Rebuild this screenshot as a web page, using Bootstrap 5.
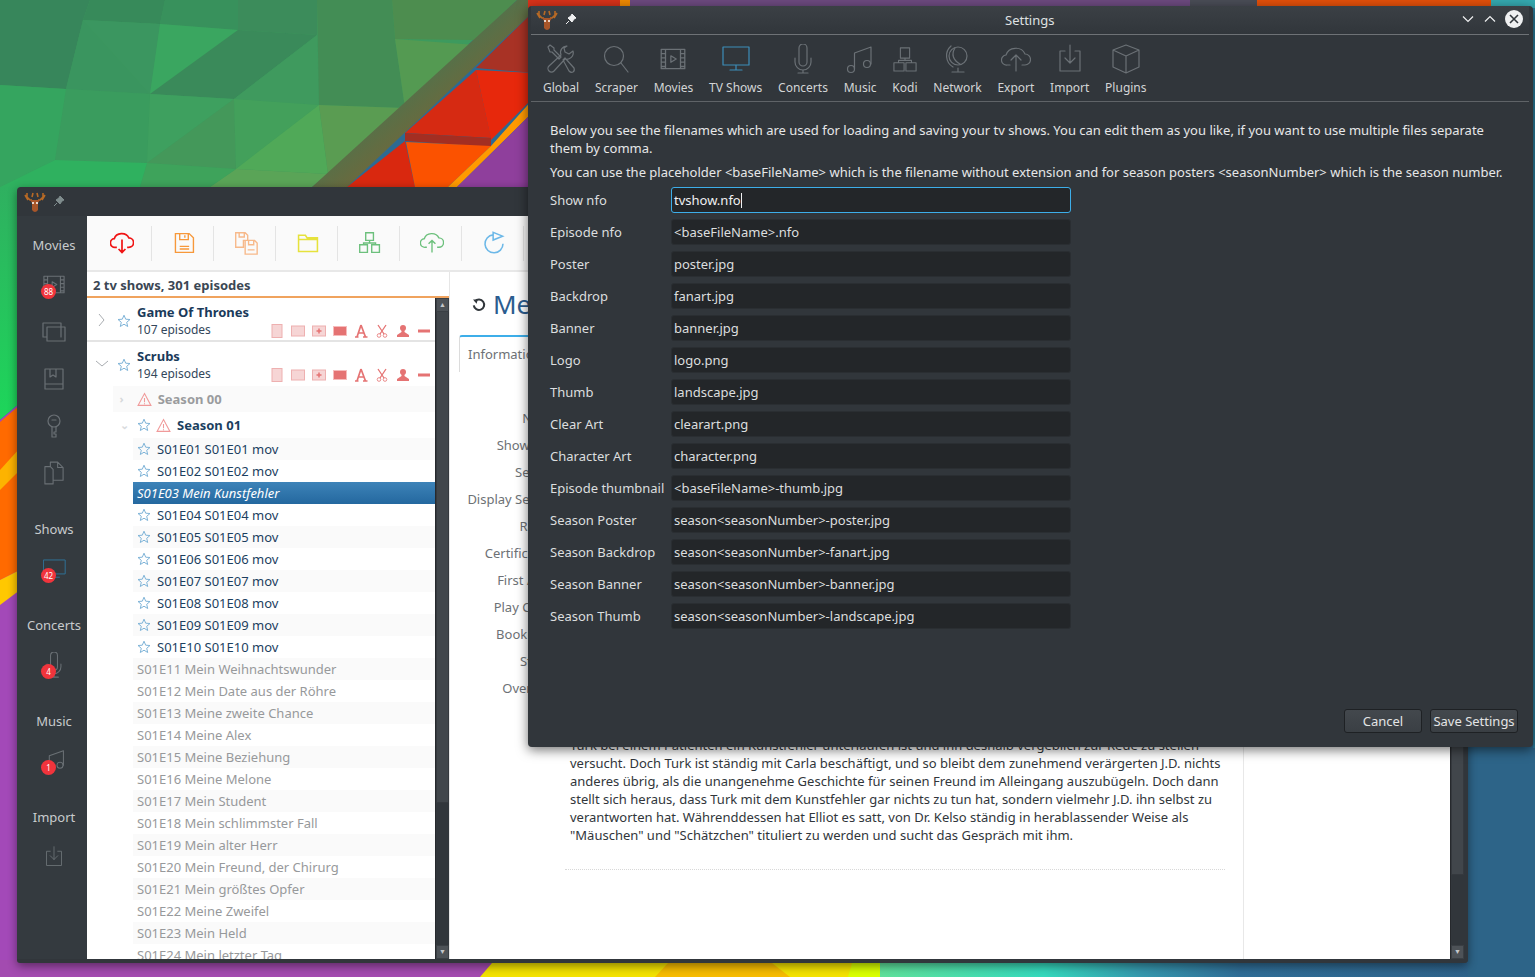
<!DOCTYPE html>
<html lang="en">
<head>
    <meta charset="UTF-8">
    <meta name="viewport" content="width=device-width, initial-scale=1.0">
    <title>MediaElch</title>
    <link href="https://cdn.jsdelivr.net/npm/bootstrap@5.3.0/dist/css/bootstrap.min.css" rel="stylesheet">
    <style>
        html, body { margin: 0; width: 1535px; height: 977px; overflow: hidden; background: #2d6a93; font-family: "Noto Sans", sans-serif; font-size: 13px; line-height: 18px; }
        .desk { position: relative; width: 1535px; height: 977px; overflow: hidden; }
        .wallpaper { position: absolute; left: 0; top: 0; }
        svg { display: block; flex: none; }
        .ico { fill: none; stroke: currentColor; stroke-width: 1.2; stroke-linejoin: round; stroke-linecap: round; }

        /* main window */
        .win-main { position: absolute; left: 17px; top: 187px; width: 1451px; height: 776px; background: #31363b; border-radius: 4px 4px 3px 3px; box-shadow: 0 3px 10px rgba(0,0,0,.45); }
        .win-head { height: 29px; color: #7f8c8d; padding: 5px 0 0 7px; gap: 7px; }
        .win-body { height: 743px; }
        .side-bar { width: 70px; background: #343a3f; padding: 20px 0 0 4px; color: #6a7075; }
        .side-title { color: #c8cbcd; text-align: center; height: 18px; }
        .side-head { margin-top: 24px; }
        .side-group { margin-top: 7px; }
        .side-icon { position: relative; height: 47px; display: flex; justify-content: center; align-items: center; }
        .red-dot { position: absolute; left: 20px; top: 23px; width: 15px; height: 15px; border-radius: 50%; background: #f0343c; color: #fff; font-size: 8px; line-height: 15px; text-align: center; }
        .main-area { width: 1377px; background: #fff; color: #31363b; overflow: hidden; }
        .tool-row { height: 56px; background: #fafafa; border-bottom: 2px solid #e8e8e8; padding: 10px 0 0 3px; }
        .tool-btn { width: 62px; height: 35px; border-right: 1px solid #e4e4e4; padding: 0 0 2px 3px; display: flex; align-items: center; justify-content: center; }
        .panes { height: 687px; }

        /* show list */
        .list-pane { width: 363px; border-right: 1px solid #e6e6e6; }
        .list-head { height: 26px; font-weight: 700; color: #3b4754; padding: 4px 6px 0; border-bottom: 2px solid #f0a35e; }
        .list-wrap { height: 661px; }
        .list-rows { width: 349px; overflow: hidden; color: #1c3f5f; }
        .show-row { height: 44px; border-bottom: 2px solid #e4e4e4; padding: 5px 0 0 50px; position: relative; }
        .show-last { border-bottom: 0; height: 44px; }
        .show-name { font-weight: 700; color: #1a3a5a; }
        .show-sub { color: #33475b; font-size: 12px; }
        .show-arrow { position: absolute; left: 8px; top: 15px; color: #a9adb1; }
        .show-star { position: absolute; left: 30px; top: 16px; }
        .flag-row { position: absolute; left: 183px; top: 26px; gap: 7px; color: #e57373; }
        .flag-row svg { width: 14px; height: 14px; }
        .season-row { height: 26px; margin-left: 26px; display: flex; align-items: center; font-weight: 700; }
        .season-off { background: #fafafa; color: #9a9c9e; }
        .season-star { margin: 0 5px 0 2px; }
        .season-name { margin-left: 6px; }
        .ep-row { height: 22px; margin-left: 46px; display: flex; align-items: center; padding-left: 4px; gap: 6px; color: #1c3f5f; }
        .ep-row:nth-child(odd) { background: #fafafa; }
        .ep-row.ep-sel { background: linear-gradient(#3d83b8, #24689f); color: #fff; font-style: italic; padding-left: 4px; }
        .ep-off { color: #97999b; padding-left: 4px; }

        /* scrollbars */
        .scroll-bar { width: 14px; background: #31363b; border-left: 1px solid #26292d; display: flex; flex-direction: column; }
        .scroll-btn { height: 14px; background: #4d5257; color: #c4c7c9; font-size: 7px; line-height: 12px; text-align: center; border: 1px solid #3a3f44; }
        .scroll-thumb { background: #41464b; border: 1px solid #35393e; border-top: 0; }
        .scroll-rest { flex: 1; }

        /* detail pane */
        .detail-pane { width: 1000px; padding: 0 0 0 9px; position: relative; }
        .detail-title { font-size: 26px; line-height: 34px; padding: 15px 0 0 12px; gap: 6px; color: #2b5c8f; height: 63px; white-space: nowrap; }
        .detail-ico { margin-top: 10px; }
        .tab-one { width: 140px; height: 37px; border-top: 2px solid #3daee9; border-left: 1px solid #dcdcdc; padding: 8px 0 0 8px; color: #6d7175; border-top-left-radius: 3px; }
        .form-labels { width: 100px; margin-top: 37px; color: #6d7175; text-align: right; }
        .form-labels div { height: 27px; }
        .over-text { position: absolute; left: 120px; top: 464px; width: 660px; color: #31363b; margin: 0; }
        .dot-line { position: absolute; left: 115px; top: 597px; width: 660px; border-top: 1px dotted #d8d8d8; }
        .side-line { position: absolute; left: 793px; top: 0; height: 100%; border-left: 1px solid #e8e8e8; }

        /* settings dialog */
        .win-dialog { position: absolute; left: 528px; top: 6px; width: 1005px; height: 741px; background: #31363b; color: #eff0f1; border-radius: 4px; box-shadow: 0 3px 12px rgba(0,0,0,.55); z-index: 2; }
        .dlg-head { height: 29px; border-bottom: 1px solid #6e7276; margin: 0 4px 0 3px; position: relative; padding: 4px 0 0 5px; gap: 7px; background: linear-gradient(#3b4045, #31363b); }
        .dlg-title { position: absolute; left: 474px; top: 5px; color: #dfe1e2; }
        .dlg-btns { position: absolute; right: 6px; top: 4px; gap: 8px; align-items: center; color: #eff0f1; }
        .dlg-close { width: 18px; height: 18px; border-radius: 50%; background: #eff0f1; color: #31363b; display: flex; align-items: center; justify-content: center; }
        .dlg-tools { height: 67px; border-bottom: 1px solid #5f6367; margin: 0 4px 0 3px; padding: 9px 0 0 4px; }
        .dlg-tool { padding: 0 7.9px; color: #6b7176; text-align: center; }
        .dlg-tool svg { margin: 0 auto 5px; }
        .dlg-tool span { color: #d3d5d6; display: block; font-size: 12px; line-height: 18px; white-space: nowrap; }
        .dlg-on { color: #3d8eb9; }
        .dlg-body { padding: 19px 22px 0; }
        .dlg-text { margin: 0 0 6px; color: #e6e7e8; }
        .dlg-text:last-of-type { margin-bottom: 3px; }
        .file-row { height: 32px; display: flex; align-items: center; }
        .file-row label { width: 121px; white-space: nowrap; color: #dcdedf; margin: 0; }
        .file-field { width: 400px; height: 26px; background: #232629; color: #dcdedf; border: 1px solid #2a2e32; border-radius: 3px; padding: 0 2px; line-height: 24px; }
        .file-on { border-color: #3daee9; color: #eff0f1; }
        .file-caret { display: inline-block; width: 1px; height: 15px; background: #eff0f1; vertical-align: -3px; }
        .dlg-foot { position: absolute; right: 15px; bottom: 14px; gap: 8px; }
        .dlg-btn { height: 24px; padding: 0; border: 1px solid #1e2124; border-radius: 3px; background: linear-gradient(#43484d, #3a3f44); color: #e3e4e5; font-size: 13px; line-height: 20px; text-align: center; }
    </style>
</head>
<body>
    <svg width="0" height="0" class="position-absolute">
        <defs>
            <symbol id="moose" viewBox="0 0 22 22">
                <path d="M3 1v4l3 3h2M1 3l3 5M9 1 8 5M19 1v4l-3 3h-2M21 3l-3 5M13 1l1 4" fill="none" stroke="#b86a25" stroke-width="1.6"/>
                <path d="M6 8h10l-2 3v7q-3 4-6 0v-7z" fill="#a8562a"/>
                <circle cx="9" cy="11" r="1" fill="#fff"/><circle cx="13" cy="11" r="1" fill="#fff"/>
            </symbol>
            <symbol id="pin" viewBox="0 0 12 12">
                <path d="M7 1l4 4-2 1-2 3-4-4 3-2zM4 8l-3 3" fill="currentColor" stroke="currentColor"/>
            </symbol>
            <symbol id="star" viewBox="0 0 14 14">
                <path d="M7 1.2 8.7 5.2l4.3.3-3.3 2.8 1 4.2L7 10.2l-3.700 2.300 1-4.200L1 5.500l4.300-.3z" fill="none" stroke="#7fb4d8" stroke-width="1"/>
            </symbol>
            <symbol id="warn" viewBox="0 0 14 14">
                <path d="M7 1.500 13 12.500H1zM7 5.500v4M7 10.500v1" fill="none" stroke="#f09a9a" stroke-width="1"/>
            </symbol>
            <symbol id="film" viewBox="0 0 24 20">
                <path d="M1 1h22v18H1zM5 1v18M19 1v18M1 5h4M1 9h4M1 13h4M1 17h4M19 5h4M19 9h4M19 13h4M19 17h4M10 7l5 3-5 3z"/>
            </symbol>
            <symbol id="mic" viewBox="0 0 20 30">
                <path d="M6 4a4 4 0 0 1 8 0v13a4 4 0 0 1-8 0zM2 14v3a8 8 0 0 0 16 0v-3M10 25v4M5 29h10"/>
            </symbol>
            <symbol id="note" viewBox="0 0 28 28">
                <circle cx="5" cy="23" r="3.500"/><circle cx="21" cy="19" r="3.500"/><path d="M8.500 23V8L25 2v17"/>
            </symbol>
            <symbol id="tv" viewBox="0 0 28 24">
                <path d="M1 1h26v17H1zM14 18v4M8 22h12"/>
            </symbol>
            <symbol id="imp" viewBox="0 0 24 28">
                <path d="M7 7H2v19h20V7h-5M12 1v17M7 13l5 5 5-5"/>
            </symbol>
        </defs>
    </svg>

    <div class="desk">
        <svg class="wallpaper" width="1535" height="977" viewBox="0 0 1535 977">
            <defs>
                <linearGradient id="band" x1="0" y1="0" x2="1" y2="1"><stop offset=".3" stop-color="#3a7a58"/><stop offset=".75" stop-color="#86602f"/></linearGradient>
                <linearGradient id="edge" x1="0" y1="0" x2="0" y2="1"><stop offset="0" stop-color="#2fb060"/><stop offset="1" stop-color="#1dd65a"/></linearGradient>
                <linearGradient id="sea" x1="0" y1="0" x2="1" y2="0"><stop offset="0" stop-color="#5fe09a"/><stop offset=".25" stop-color="#34d8bc"/><stop offset=".4" stop-color="#3597ad"/><stop offset=".55" stop-color="#2f6d96"/><stop offset="1" stop-color="#2d5f86"/></linearGradient>
            </defs>
            <rect width="1535" height="977" fill="#2d6a93"/>
            <!-- green side -->
            <polygon points="0,0 517,0 312,187 0,187" fill="#3d9a5e"/>
            <polygon points="0,0 90,0 83,20 66,89 0,85" fill="#37865b"/>
            <polygon points="90,0 165,0 160,24 83,20" fill="#378a5a"/>
            <polygon points="165,0 238,0 238,30 160,24" fill="#38915c"/>
            <polygon points="83,20 150,94 66,89" fill="#3a955f"/>
            <polygon points="83,20 160,24 150,94" fill="#3b9660"/>
            <polygon points="160,24 238,30 150,94" fill="#3aa660"/>
            <polygon points="238,30 317,35 234,99 150,94" fill="#3a8a5a"/>
            <polygon points="238,0 317,0 317,35 238,30" fill="#3c8c5b"/>
            <polygon points="317,35 319,105 234,99" fill="#3f9a5e"/>
            <polygon points="317,0 392,0 395,39 405,108 319,105" fill="#438d55"/>
            <polygon points="392,0 517,0 476,40 395,39" fill="#4d8d4f"/>
            <polygon points="395,39 476,45 405,108" fill="#549a52"/>
            <polygon points="66,89 150,94 147,163 55,160" fill="#3a9c5e"/>
            <polygon points="150,94 234,99 147,163" fill="#3ea05f"/>
            <polygon points="234,99 236,169 147,163" fill="#44985a"/>
            <polygon points="234,99 319,105 236,169" fill="#43a05b"/>
            <polygon points="319,105 328,174 236,169" fill="#50a958"/>
            <polygon points="319,105 405,108 328,174" fill="#5a9c52"/>
            <polygon points="236,169 328,174 312,187 210,187" fill="#5aa457"/>
            <polygon points="147,163 236,169 210,187 140,187" fill="#3ea35b"/>
            <polygon points="0,85 66,89 55,160 0,187" fill="#35a55f"/>
            <polygon points="55,160 147,163 140,187 0,187" fill="#2fb15f"/>
            <polygon points="0,187 20,187 20,403 0,420" fill="url(#edge)"/>
            <!-- diagonal band and reds -->
            <polygon points="517,0 535,0 535,10 347,187 312,187" fill="url(#band)"/>
            <polygon points="476,68 535,10 535,73" fill="#a83225"/>
            <polygon points="476,70 535,73 535,96 491,140" fill="#e7280c"/>
            <polygon points="476,70 405,133 491,138" fill="#d62a12"/>
            <polygon points="405,133 491,138 491,147 405,141" fill="#a32e22"/>
            <polygon points="405,141 415,187 347,187" fill="#d9280f"/>
            <polygon points="406,142 491,146 448,187 415,187" fill="#fb5200"/>
            <polygon points="491,146 535,97 535,110 457,187 448,187" fill="#ff9a00"/>
            <polygon points="535,110 535,187 457,187" fill="#8f3f9c"/>
            <!-- left edge under the main window -->
            <polygon points="0,420 20,403 20,977 0,977" fill="#a349b8"/>
            <polygon points="0,422 20,405 20,570 0,580" fill="#ff6a00"/>
            <polygon points="0,470 20,448 20,470 0,490" fill="#fdb300"/>
            <polygon points="0,580 20,570 20,590 0,605" fill="#ffc800"/>
            <!-- bottom strip -->
            <rect x="0" y="960" width="510" height="17" fill="#a34bb0"/>
            <polygon points="492,963 885,963 880,977 480,977" fill="#f3e200"/>
            <polygon points="668,963 772,963 790,977 655,977" fill="#f6bb00"/>
            <polygon points="852,963 885,963 880,977 848,977" fill="#d9ff00"/>
            <rect x="880" y="963" width="655" height="14" fill="url(#sea)"/>
            <rect x="1468" y="740" width="67" height="237" fill="#2d6488"/>
            <!-- top strip above the dialog -->
            <rect x="528" y="0" width="92" height="8" fill="#d8321a"/>
            <rect x="620" y="0" width="10" height="8" fill="#f08a00"/>
            <rect x="630" y="0" width="560" height="8" fill="#6d4a80"/>
            <rect x="1190" y="0" width="67" height="8" fill="#4a4d57"/>
            <rect x="1257" y="0" width="234" height="8" fill="#e4500a"/>
            <rect x="1491" y="0" width="44" height="8" fill="#35a9b0"/>
            <rect x="1533" y="8" width="2" height="740" fill="#2a7a98"/>
        </svg>

        <!-- main window -->
        <div class="win-main">
            <div class="win-head d-flex">
                <svg width="22" height="22"><use href="#moose"/></svg>
                <svg width="12" height="12" class="mt-1"><use href="#pin"/></svg>
            </div>
            <div class="win-body d-flex">
                <div class="side-bar" id="sideBar"></div>
                <div class="main-area">
                    <div class="tool-row d-flex" id="toolRow"></div>
                    <div class="panes d-flex">
                        <div class="list-pane">
                            <div class="list-head">2 tv shows, 301 episodes</div>
                            <div class="list-wrap d-flex">
                                <div class="list-rows" id="listRows"></div>
                                <div class="scroll-bar">
                                    <div class="scroll-btn">▲</div>
                                    <div class="scroll-thumb" style="height: 491px"></div>
                                    <div class="scroll-rest"></div>
                                    <div class="scroll-btn">▼</div>
                                </div>
                            </div>
                        </div>
                        <div class="detail-pane">
                            <div class="detail-title d-flex">
                                <svg width="16" height="16" viewBox="0 0 20 20" class="detail-ico"><path d="M5 5.500a6.500 6.500 0 1 1-1.500 5" fill="none" stroke="#31363b" stroke-width="2.600"/><path d="M2.500 3l6 0-1.500 5.500z" fill="#31363b"/></svg>
                                Mein Kunstfehler
                            </div>
                            <div class="tab-one">Information</div>
                            <div class="form-labels">
                                <div>Name</div><div>Show Title</div><div>Season</div><div>Display Season</div><div>Rating</div><div>Certification</div><div>First Aired</div><div>Play Count</div><div>Bookmark</div><div>Studio</div><div>Overview</div>
                            </div>
                            <p class="over-text">Turk bei einem Patienten ein Kunstfehler unterlaufen ist und ihn deshalb vergeblich zur Rede zu stellen versucht. Doch Turk ist ständig mit Carla beschäftigt, und so bleibt dem zunehmend verärgerten J.D. nichts anderes übrig, als die unangenehme Geschichte für seinen Freund im Alleingang auszubügeln. Doch dann stellt sich heraus, dass Turk mit dem Kunstfehler gar nichts zu tun hat, sondern vielmehr J.D. ihn selbst zu verantworten hat. Währenddessen hat Elliot es satt, von Dr. Kelso ständig in herablassender Weise als "Mäuschen" und "Schätzchen" tituliert zu werden und sucht das Gespräch mit ihm.</p>
                            <div class="dot-line"></div>
                            <div class="side-line"></div>
                        </div>
                        <div class="scroll-bar">
                            <div class="scroll-btn">▲</div>
                            <div class="scroll-thumb" style="height: 589px"></div>
                            <div class="scroll-rest"></div>
                            <div class="scroll-btn">▼</div>
                        </div>
                    </div>
                </div>
            </div>
        </div>

        <!-- settings dialog -->
        <div class="win-dialog">
            <div class="dlg-head d-flex">
                <svg width="22" height="22"><use href="#moose"/></svg>
                <svg width="12" height="12" class="mt-1" style="color:#eff0f1"><use href="#pin"/></svg>
                <div class="dlg-title">Settings</div>
                <div class="dlg-btns d-flex">
                    <svg width="14" height="14" viewBox="0 0 14 14"><path d="M2 4.500l5 5 5-5" fill="none" stroke="currentColor" stroke-width="1.200"/></svg>
                    <svg width="14" height="14" viewBox="0 0 14 14"><path d="M2 9.500l5-5 5 5" fill="none" stroke="currentColor" stroke-width="1.200"/></svg>
                    <div class="dlg-close"><svg width="10" height="10" viewBox="0 0 10 10"><path d="M1 1l8 8M9 1l-8 8" stroke="currentColor" stroke-width="1.600"/></svg></div>
                </div>
            </div>
            <div class="dlg-tools d-flex" id="dlgTools"></div>
            <div class="dlg-body">
                <p class="dlg-text">Below you see the filenames which are used for loading and saving your tv shows. You can edit them as you like, if you want to use multiple files separate them by comma.</p>
                <p class="dlg-text">You can use the placeholder &lt;baseFileName&gt; which is the filename without extension and for season posters &lt;seasonNumber&gt; which is the season number.</p>
                <div id="fileRows"></div>
            </div>
            <div class="dlg-foot d-flex">
                <button class="dlg-btn" style="width: 78px">Cancel</button>
                <button class="dlg-btn" style="width: 88px">Save Settings</button>
            </div>
        </div>
    </div>

    <script>
        // sidebar
        const sideData = [
            { title: "Movies", icons: [["film", 88, 22, 19], ["boxes"], ["book"], ["key"], ["docs"]] },
            { title: "Shows", icons: [["tv", 42, 23, 20]] },
            { title: "Concerts", icons: [["mic", 4, 18, 26]] },
            { title: "Music", icons: [["note", 1, 24, 24]] },
            { title: "Import", icons: [["imp", 0, 18, 21]] }
        ];
        const sideSvg = {
            boxes: '<svg class="ico" width="24" height="20" viewBox="0 0 24 20"><path d="M1 1h18v14M5 5h18v14H5zM1 1v14h4"/></svg>',
            book: '<svg class="ico" width="20" height="22" viewBox="0 0 20 22"><path d="M1 1h18v20H1zM1 16h18M6 1v8l3-2 3 2V1"/></svg>',
            key: '<svg class="ico" width="14" height="24" viewBox="0 0 14 24"><circle cx="7" cy="7" r="6"/><path d="M5 13v10h4v-3H7v-2h2v-5M5 6h4"/></svg>',
            docs: '<svg class="ico" width="20" height="24" viewBox="0 0 22 26"><path d="M1 6h6l3 3v16H1zM7 6V1h8l6 6v14H10M15 1v6h6"/></svg>'
        };
        document.getElementById("sideBar").innerHTML = sideData.map((sec, i) => {
            let icons = sec.icons.map(ic => {
                let dot = ic[1] ? `<span class="red-dot">${ic[1]}</span>` : "";
                let col = ic[0] === "tv" ? ' style="color:#2f7296"' : "";
                let svg = sideSvg[ic[0]] || `<svg class="ico" width="${ic[2]}" height="${ic[3]}"${col}><use href="#${ic[0]}"/></svg>`;
                return `<div class="side-icon">${svg}${dot}</div>`;
            }).join("");
            return `<div class="side-title ${i ? "side-head" : ""}">${sec.title}</div><div class="side-group">${icons}</div>`;
        }).join("");

        // toolbar
        const toolIcons = [
            ["#f01414", 2, '<path d="M8 19H6a5 5 0 0 1-1-10 9 8 0 0 1 17-1 5.500 5.500 0 0 1 0 11h-2M14 10v15M10 21l4 4 4-4"/>'],
            ["#f7983a", 1.6, '<path d="M4 3h16l5 5v17H4zM9 3v7h10V3M15 5v3M9 18h11M9 21h11"/>'],
            ["#f7b98a", 1.6, '<path d="M2 2h11l3 3v6h-5v8H2zM6 2v5h6V2M13 11h11l3 3v13H13zM17 11v5h6v-5M16 22h8"/>'],
            ["#e6e23c", 1.8, '<path d="M3 5h8l2 3h12v16H3zM3 10h22"/>'],
            ["#6cc07c", 1.6, '<path d="M9 2h9v9H9zM2 16h9v9H2zM16 16h9v9h-9zM13.500 11v3M6.500 16v-2h14v2"/>'],
            ["#6cc07c", 1.6, '<path d="M8 19H6a5 5 0 0 1-1-10 9 8 0 0 1 17-1 5.500 5.500 0 0 1 0 11h-2M14 25V11M10 15l4-4 4 4"/>'],
            ["#6cb8e8", 1.8, '<path d="M13 4.500A10.500 10.500 0 1 0 24.500 15M13 1.500v9l11-4.500z"/>']
        ];
        document.getElementById("toolRow").innerHTML = toolIcons.map(t =>
            `<div class="tool-btn"><svg width="24" height="24" viewBox="0 0 28 28" fill="none" stroke="${t[0]}" stroke-width="${t[1]}">${t[2]}</svg></div>`
        ).join("");

        // list
        const flags = `<div class="flag-row d-flex">
            <svg viewBox="0 0 14 14"><rect x="2" y="0.500" width="10" height="13" fill="#f6d5d5" stroke="#eeb0b0"/></svg>
            <svg viewBox="0 0 14 14"><rect x="0.500" y="2" width="13" height="10" fill="#f6d5d5" stroke="#eeb0b0"/></svg>
            <svg viewBox="0 0 14 14"><rect x="0.500" y="2" width="13" height="10" fill="#f6d5d5" stroke="#eeb0b0"/><path d="M7 4.500v5M4.500 7h5" stroke="#e57373" stroke-width="1.500"/></svg>
            <svg viewBox="0 0 14 14"><rect x="0.500" y="2.500" width="13" height="9" fill="#e57373" stroke="#f6bcbc"/></svg>
            <svg viewBox="0 0 14 14"><path d="M1 13h3.500M9 13h4.500M7 1 3 13M7 1l4.500 12M4.500 9h5.500" fill="none" stroke="#e57373" stroke-width="1.700"/></svg>
            <svg viewBox="0 0 14 14"><circle cx="4" cy="11.500" r="1.800" fill="none" stroke="#eb8b8b"/><circle cx="10" cy="11.500" r="1.800" fill="none" stroke="#eb8b8b"/><path d="M3 1l6 9M11 1 5 10" stroke="#e57373" stroke-width="1.300"/></svg>
            <svg viewBox="0 0 14 14"><circle cx="7" cy="4" r="3" fill="#e57373"/><path d="M5.500 6v2L1 11v2h12v-2L8.500 8V6z" fill="#e57373"/></svg>
            <svg viewBox="0 0 14 14"><rect x="1" y="5.500" width="12" height="3" fill="#e57373"/></svg>
        </div>`;
        function star() { return '<svg width="14" height="14"><use href="#star"/></svg>'; }
        function warn() { return '<svg width="15" height="15"><use href="#warn"/></svg>'; }
        function showRow(name, sub, open, last) {
            let arrow = open ? '<path d="M1 4l6 5 6-5"/>' : '<path d="M4 1l5 6-5 6"/>';
            return `<div class="show-row ${last ? "show-last" : ""}">
                <svg class="show-arrow" width="14" height="14" viewBox="0 0 14 14" fill="none" stroke="currentColor">${arrow}</svg>
                <span class="show-star">${star()}</span>
                <div class="show-name">${name}</div><div class="show-sub">${sub}</div>${flags}</div>`;
        }
        let html = showRow("Game Of Thrones", "107 episodes", false) + showRow("Scrubs", "194 episodes", true, true);
        html += `<div class="season-row season-off"><small class="text-secondary opacity-25 ms-2 me-3">›</small>${warn()}<span class="season-name">Season 00</span></div>`;
        html += `<div class="season-row"><small class="text-secondary opacity-25 ms-2 me-2">⌄</small><span class="season-star">${star()}</span>${warn()}<span class="season-name">Season 01</span></div>`;
        const offEps = ["Mein Weihnachtswunder", "Mein Date aus der Röhre", "Meine zweite Chance", "Meine Alex", "Meine Beziehung", "Meine Melone", "Mein Student", "Mein schlimmster Fall", "Mein alter Herr", "Mein Freund, der Chirurg", "Mein größtes Opfer", "Meine Zweifel", "Mein Held", "Mein letzter Tag"];
        let eps = "";
        for (let i = 1; i <= 10; i++) {
            let code = "S01E" + String(i).padStart(2, "0");
            if (i === 3) {
                eps += `<div class="ep-row ep-sel">S01E03 Mein Kunstfehler</div>`;
            } else {
                eps += `<div class="ep-row">${star()}<span>${code} ${code} mov</span></div>`;
            }
        }
        offEps.forEach((t, i) => {
            eps += `<div class="ep-row ep-off">S01E${i + 11} ${t}</div>`;
        });
        document.getElementById("listRows").innerHTML = html + `<div>${eps}</div>`;

        // settings toolbar
        const dlgTools = [
            ["Global", '<svg class="ico" width="30" height="30" viewBox="0 0 30 30"><path d="M2 3l2-2 4 3v2l7 7-2 2-7-7H4zM17 16l2-2 9 10q1 3-1 4t-4-1zM21 2a6.500 6.500 0 0 0-6 9L3 22a3.500 3.500 0 0 0 5 5L19 15a6.500 6.500 0 0 0 8-8l-4 3-4-2-1-4z"/></svg>'],
            ["Scraper", '<svg class="ico" width="26" height="30" viewBox="0 0 26 30"><circle cx="11" cy="12" r="9.500"/><path d="M18 19l7 9"/></svg>'],
            ["Movies", '<svg class="ico" width="26" height="30" viewBox="0 0 24 28"><path d="M1 5h22v18H1zM5 5v18M19 5v18M1 9h4M1 13h4M1 17h4M1 21h4M19 9h4M19 13h4M19 17h4M19 21h4M10 11l5 3-5 3z"/></svg>'],
            ["TV Shows", '<svg class="ico" width="28" height="30" viewBox="0 0 28 30"><path d="M1 3h26v18H1zM14 21v5M8 26h12"/></svg>'],
            ["Concerts", '<svg class="ico" width="24" height="30" viewBox="0 0 24 30"><path d="M8 4a4 4 0 0 1 8 0v14a4 4 0 0 1-8 0zM4 14v4a8 8 0 0 0 16 0v-4M12 26v3M7 29h10"/></svg>'],
            ["Music", '<svg class="ico" width="28" height="30" viewBox="0 0 28 30"><circle cx="5" cy="25" r="3.500"/><circle cx="21" cy="20" r="3.500"/><path d="M8.500 25V9L25 3v17"/></svg>'],
            ["Kodi", '<svg class="ico" width="24" height="30" viewBox="0 0 26 30"><path d="M8 3h10v11H8zM1 19h11v9H1zM14 19h11v9H14zM13 14v2.500M6 19v-2.500h14V19"/></svg>'],
            ["Network", '<svg class="ico" width="26" height="30" viewBox="0 0 26 30"><circle cx="14" cy="12" r="9"/><path d="M7 2a13 13 0 0 0 2 21M14 24v3M8 28h12M11 4c-4 6-2 12 5 16"/></svg>'],
            ["Export", '<svg class="ico" width="30" height="30" viewBox="0 0 30 30"><path d="M9 21H6a5 5 0 0 1-1-10 10 9 0 0 1 19-1 5.500 5.500 0 0 1 0 11h-3M15 27V11M10 16l5-5 5 5"/></svg>'],
            ["Import", '<svg class="ico" width="22" height="30" viewBox="0 0 22 30"><path d="M6 7H1v20h20V7h-5M11 1v18M6 14l5 5 5-5"/></svg>'],
            ["Plugins", '<svg class="ico" width="28" height="30" viewBox="0 0 28 30"><path d="M14 1l13 5v17l-13 6-13-6V6zM1 6l13 6 13-6M14 12v17"/></svg>']
        ];
        document.getElementById("dlgTools").innerHTML = dlgTools.map(t =>
            `<div class="dlg-tool ${t[0] === "TV Shows" ? "dlg-on" : ""}">${t[1]}<span>${t[0]}</span></div>`
        ).join("");

        // filename rows
        const fileRows = [
            ["Show nfo", "tvshow.nfo"], ["Episode nfo", "<baseFileName>.nfo"], ["Poster", "poster.jpg"], ["Backdrop", "fanart.jpg"],
            ["Banner", "banner.jpg"], ["Logo", "logo.png"], ["Thumb", "landscape.jpg"], ["Clear Art", "clearart.png"],
            ["Character Art", "character.png"], ["Episode thumbnail", "<baseFileName>-thumb.jpg"], ["Season Poster", "season<seasonNumber>-poster.jpg"],
            ["Season Backdrop", "season<seasonNumber>-fanart.jpg"], ["Season Banner", "season<seasonNumber>-banner.jpg"], ["Season Thumb", "season<seasonNumber>-landscape.jpg"]
        ];
        const esc = s => s.replace(/</g, "&lt;").replace(/>/g, "&gt;");
        document.getElementById("fileRows").innerHTML = fileRows.map((r, i) =>
            `<div class="file-row"><label>${r[0]}</label><div class="file-field ${i ? "" : "file-on"}">${esc(r[1])}${i ? "" : '<span class="file-caret"></span>'}</div></div>`
        ).join("");
    </script>
    <script src="https://cdn.jsdelivr.net/npm/bootstrap@5.3.0/dist/js/bootstrap.bundle.min.js"></script>
</body>
</html>
